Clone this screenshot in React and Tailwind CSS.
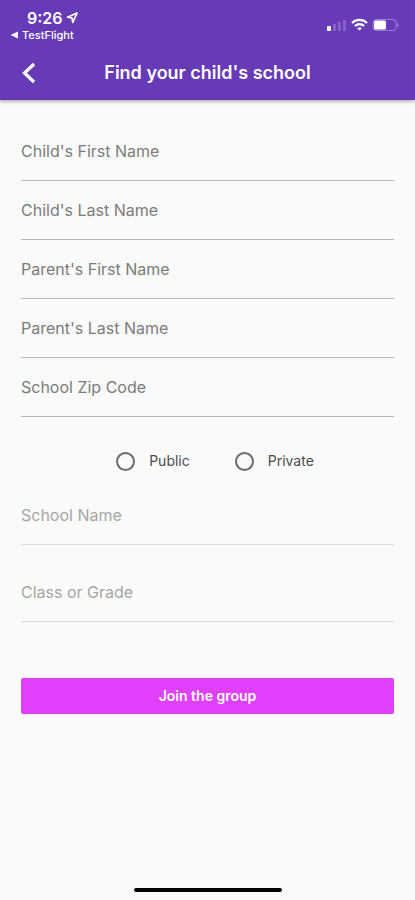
import React from 'react';

function Field({ id, label, disabled = false }) {
  return (
    <div
      className={
        disabled
          ? 'grid h-[59px] border-b border-[#dcdcdc] text-[#a6a6a6]'
          : 'grid h-[59px] border-b border-[#b9b9b9] text-[#7c7c7c]'
      }
    >
      <input
        id={id}
        type="text"
        placeholder=" "
        disabled={disabled}
        className="peer col-start-1 row-start-1 w-full bg-transparent text-base text-[#212121] outline-none"
      />
      <label
        htmlFor={id}
        className="pointer-events-none invisible col-start-1 row-start-1 self-center text-base leading-6 peer-placeholder-shown:visible"
      >
        {label}
      </label>
    </div>
  );
}

function Choice({ id, label }) {
  return (
    <div className="flex items-center gap-[14px]">
      <input
        id={id}
        type="radio"
        name="school-type"
        className="size-[19px] appearance-none rounded-full border-2 border-[#6a6a6a] checked:border-[6px] checked:border-[#e040fb]"
      />
      <label htmlFor={id} className="text-sm leading-5 text-[#4c4c4c]">
        {label}
      </label>
    </div>
  );
}

function StatusBar() {
  return (
    <div className="flex items-start justify-between pt-2 pr-4 pl-[10px]">
      <div>
        <div className="flex items-center gap-[3px] pl-[17px] text-base leading-5 font-semibold">
          <span>9:26</span>
          <svg width="12" height="12" viewBox="0 0 12 12" fill="none" stroke="currentColor" strokeWidth="1.7" strokeLinejoin="round" aria-hidden="true">
            <path d="M11 1 1.500 5.200 6 6l.8 4.500z" />
          </svg>
        </div>
        <div className="flex items-center gap-1 text-[11px] leading-[14px] font-medium">
          <svg width="8" height="8" viewBox="0 0 8 8" fill="currentColor" aria-hidden="true">
            <path d="M8 .5v7L.5 4z" />
          </svg>
          <span>TestFlight</span>
        </div>
      </div>
      <div className="flex items-center gap-1 pt-[10px]">
        <svg width="20" height="14" viewBox="0 0 20 14" fill="currentColor" aria-hidden="true">
          <rect x="0" y="8" width="4" height="5" rx="1" />
          <g opacity=".2">
            <rect x="6" y="6" width="3" height="7" rx="1" />
            <rect x="11" y="4" width="3" height="9" rx="1" />
            <rect x="16" y="2" width="3" height="11" rx="1" />
          </g>
        </svg>
        <svg width="17" height="14" viewBox="0 0 17 14" fill="none" stroke="currentColor" strokeWidth="2.2" aria-hidden="true">
          <path d="M1 5a10.7 10.7 0 0 1 15 0" />
          <path d="M3.9 8a6.6 6.6 0 0 1 9.200 0" />
          <path d="M8.500 12.600 6.200 10.400a3.300 3.300 0 0 1 4.600 0z" fill="currentColor" stroke="none" />
        </svg>
        <svg width="27" height="14" viewBox="0 0 27 14" aria-hidden="true">
          <rect x="1" y="1.5" width="23" height="11" rx="3" fill="none" stroke="#fff" strokeOpacity=".35" />
          <rect x="2" y="2.5" width="12" height="9" rx="1.5" fill="#fff" />
          <path d="M25.200 5v4a2.200 2.200 0 0 0 0-4z" fill="#fff" fillOpacity=".4" />
        </svg>
      </div>
    </div>
  );
}

export default function App() {
  return (
    <div className="flex min-h-screen flex-col bg-[#fafafa] font-['Inter','Liberation_Sans',sans-serif]">
      <header className="h-[100px] bg-[#673ab7] text-white shadow-[0_1px_4px_rgba(0,0,0,0.4)]">
        <StatusBar />
        <div className="grid h-[62px] grid-cols-[56px_1fr_56px] items-center">
          <button type="button" aria-label="Back" className="flex h-12 items-center pl-[21px]">
            <svg width="16" height="22" viewBox="0 0 16 22" fill="none" stroke="currentColor" strokeWidth="3.2" aria-hidden="true">
              <path d="M13 2 3.500 11 13 20" />
            </svg>
          </button>
          <h1 className="text-center text-lg leading-6 font-semibold">Find your child's school</h1>
        </div>
      </header>

      <form className="px-[21px] pt-[22px]" onSubmit={(e) => e.preventDefault()}>
        <Field id="child-first" label="Child's First Name" />
        <Field id="child-last" label="Child's Last Name" />
        <Field id="parent-first" label="Parent's First Name" />
        <Field id="parent-last" label="Parent's Last Name" />
        <Field id="zip" label="School Zip Code" />
        <div className="mt-6 mb-[5px] flex h-10 items-center justify-center gap-[45px] pl-[15px]">
          <Choice id="public" label="Public" />
          <Choice id="private" label="Private" />
        </div>
        <div className="flex flex-col gap-[18px]">
          <Field id="school" label="School Name" disabled />
          <Field id="grade" label="Class or Grade" disabled />
        </div>
        <button
          type="submit"
          className="mt-14 h-9 w-full rounded-xs bg-[#e040fb] text-sm leading-5 font-semibold text-white"
        >
          Join the group
        </button>
      </form>

      <div className="mt-auto flex justify-center pb-2">
        <div className="h-1 w-[148px] rounded-full bg-black" />
      </div>
    </div>
  );
}
